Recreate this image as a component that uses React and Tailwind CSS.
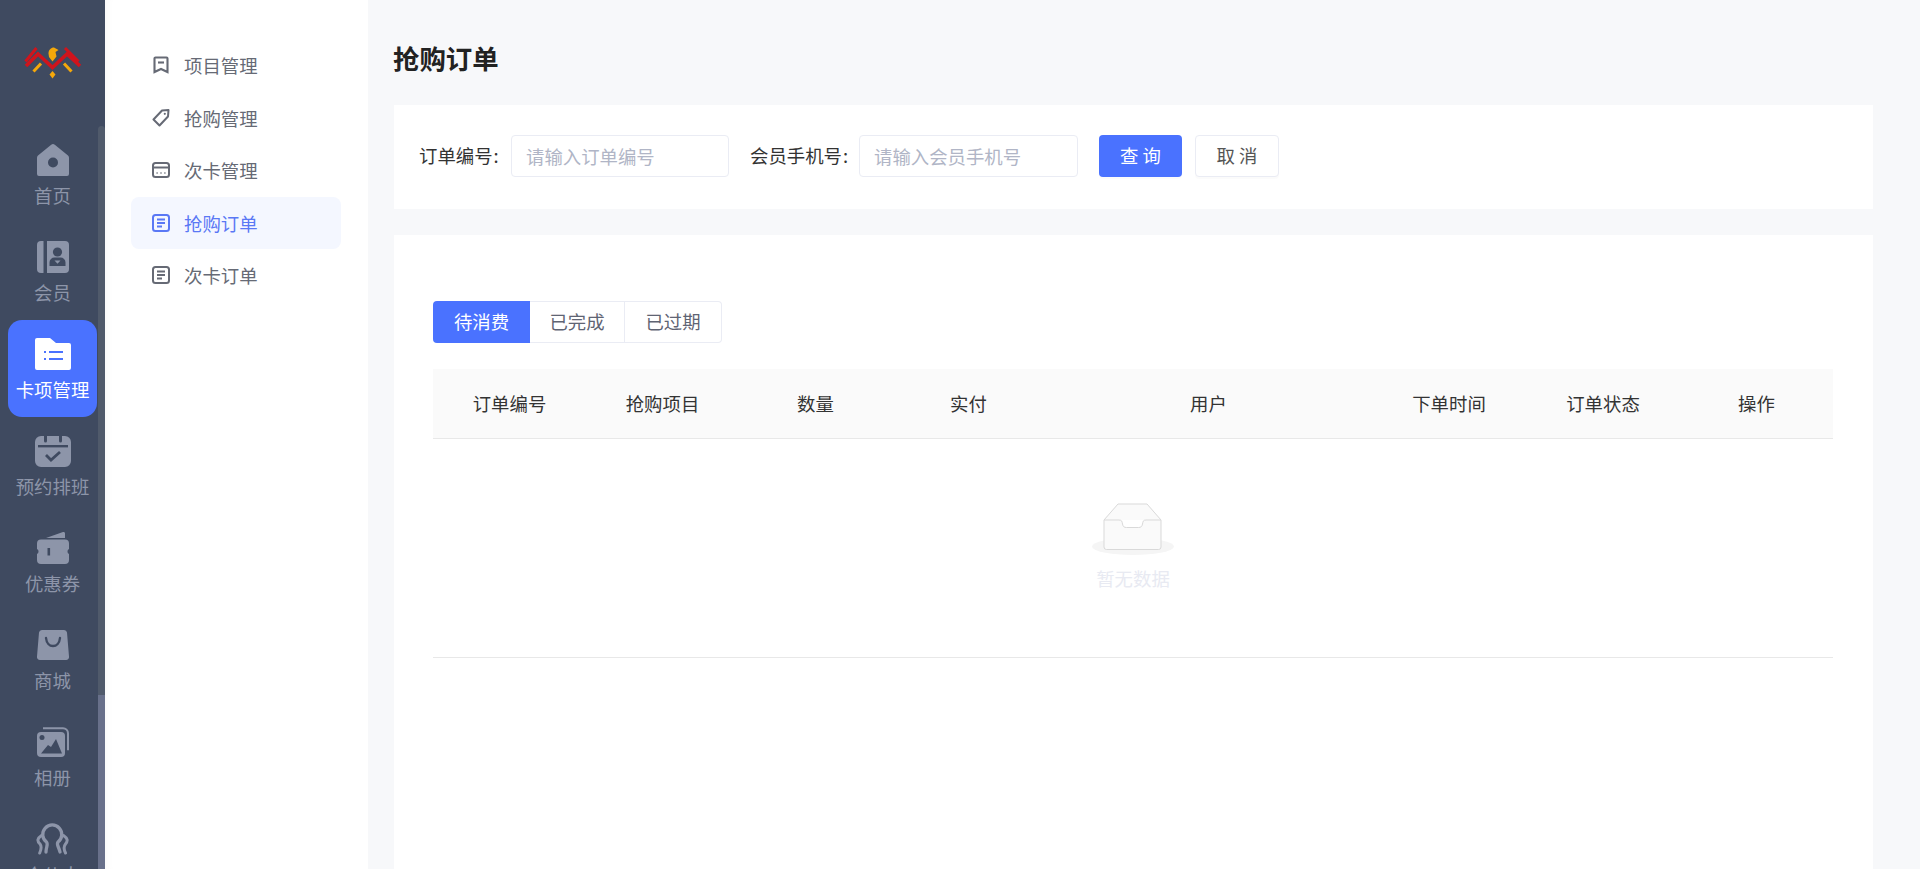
const hole = '#3f4a60'

function Logo() {
  return (
    <svg width="64" height="40" viewBox="0 0 64 40" fill="none">
      <path d="M4.500 20.500L15.500 7M44 7L57.500 20.500" stroke="#d0141c" strokeWidth="3" />
      <path d="M5 25L17 13L31.500 26.500L46 13L59 25" stroke="#d0141c" strokeWidth="3.600" />
      <path d="M12.500 30.500L20 22.500M43 22.500L50.500 30.500" stroke="#f5a80a" strokeWidth="3" />
      <path d="M27.500 12.500C27.500 9 30 6.500 33 6.500L37.500 9L34.500 11L35.500 15.500L31.500 20.500L28 16Z" fill="#f5a80a" />
      <path d="M31.500 30L34.500 33.500L31.500 37.500L28.500 33.500Z" fill="#f5a80a" />
    </svg>
  )
}

function HomeIcon() {
  return (
    <svg width="32" height="32" viewBox="0 0 32 32">
      <path d="M14.200 .7a3 3 0 0 1 3.600 0L31 11.500a3 3 0 0 1 1 2.300V30a2 2 0 0 1-2 2H2a2 2 0 0 1-2-2V13.800a3 3 0 0 1 1-2.300Z" fill="currentColor" />
      <circle cx="16" cy="18.500" r="5" fill={hole} />
    </svg>
  )
}

function MemberIcon() {
  return (
    <svg width="32" height="32" viewBox="0 0 32 32">
      <path d="M6.500 0H4a4 4 0 0 0-4 4v24a4 4 0 0 0 4 4h2.500Z" fill="currentColor" />
      <path d="M10 0h18a4 4 0 0 1 4 4v24a4 4 0 0 1-4 4H10Z" fill="currentColor" />
      <circle cx="20.500" cy="11" r="4.600" fill={hole} />
      <path d="M12.500 25v-3.500a5 5 0 0 1 5-5h6a5 5 0 0 1 5 5V25Z" fill={hole} />
      <path d="M17.500 19.500h6l-3 3.200Z" fill="currentColor" />
    </svg>
  )
}

function FolderIcon() {
  return (
    <svg width="36" height="32" viewBox="0 0 36 32">
      <path d="M0 2a2 2 0 0 1 2-2h13l6 5h13a2 2 0 0 1 2 2v23a2 2 0 0 1-2 2H2a2 2 0 0 1-2-2Z" fill="#fff" />
      <path d="M14 13h14v2H14ZM14 20h14v2H14ZM9 13h2v2H9ZM9 20h2v2H9Z" fill="#4a72ff" />
    </svg>
  )
}

function CalendarIcon() {
  return (
    <svg width="36" height="32" viewBox="0 0 36 32">
      <path d="M6 1h3v5a1.500 1.500 0 0 0 3 0V1h12v5a1.500 1.500 0 0 0 3 0V1h3a6 6 0 0 1 6 6v19a6 6 0 0 1-6 6H6a6 6 0 0 1-6-6V7a6 6 0 0 1 6-6Z" fill="currentColor" />
      <path d="M3 10h30v2.400H3Z" fill={hole} />
      <path d="M11 20l5 5 9-8" fill="none" stroke={hole} strokeWidth="2.800" />
    </svg>
  )
}

function WalletIcon() {
  return (
    <svg width="32" height="32" viewBox="0 0 32 32">
      <path d="M9 6L26 0a1.500 1.500 0 0 1 2 1.500V6Z" fill="currentColor" />
      <path d="M4 7.500h24a4 4 0 0 1 4 4v5.500a2.500 2.500 0 0 0-1.500 2.500 2.500 2.500 0 0 0 1.500 2.500v6a4 4 0 0 1-4 4H4a4 4 0 0 1-4-4v-6a2.500 2.500 0 0 0 1.500-2.500A2.500 2.500 0 0 0 0 17v-5.500a4 4 0 0 1 4-4Z" fill="currentColor" />
      <path d="M10.500 16h2.600v7.500h-2.600Z" fill={hole} />
    </svg>
  )
}

function BagIcon() {
  return (
    <svg width="32" height="30" viewBox="0 0 32 30">
      <path d="M5 0h22a3 3 0 0 1 3 2.500l2 24a3 3 0 0 1-3 3.500H3a3 3 0 0 1-3-3.500l2-24A3 3 0 0 1 5 0Z" fill="currentColor" />
      <path d="M9 8c.5 5 3.500 8 7 8s6.500-3 7-8" fill="none" stroke={hole} strokeWidth="2.400" strokeLinecap="round" />
    </svg>
  )
}

function PhotoIcon() {
  return (
    <svg width="32" height="30" viewBox="0 0 32 30">
      <path d="M6 1.200h20a5 5 0 0 1 5 5v17" fill="none" stroke="currentColor" strokeWidth="2" />
      <rect x="0" y="5" width="28" height="25" rx="4" fill="currentColor" />
      <circle cx="5" cy="10.500" r="2.500" fill={hole} />
      <path d="M4 26.500L11 18l3 2 5-8 6 14.500Z" fill={hole} />
    </svg>
  )
}

function OctoIcon() {
  return (
    <svg width="34" height="32" viewBox="0 0 34 32" fill="none" stroke="currentColor" strokeLinecap="round">
      <path d="M10 29C10 24 12.500 21.500 10.500 19A9.500 9.500 0 1 1 22 19C20 21.500 23 24 24 29" strokeWidth="3.300" />
      <path d="M5.500 12.500C1 15.500 1 18 4 21C6 23.500 5 27 3.700 30M27.500 12.500C32 15.500 32 18 29.500 21C27.500 23.500 28 27 29.500 30" strokeWidth="3" />
    </svg>
  )
}

function BookmarkIcon() {
  return (
    <svg width="18" height="18" viewBox="0 0 18 18" fill="none" stroke="currentColor" strokeWidth="2.100">
      <path d="M3.500 1.500h11a1 1 0 0 1 1 1V16L9 13l-6.500 3V2.500a1 1 0 0 1 1-1Z" />
      <path d="M6 6.500h6" />
    </svg>
  )
}

function TagIcon() {
  return (
    <svg width="18" height="18" viewBox="0 0 18 18" fill="none" stroke="currentColor" strokeWidth="2">
      <path d="M1.500 10.500L10 1.500l6.500-.5-.5 6.500L7.500 16.500Z" strokeLinejoin="round" />
      <circle cx="12.800" cy="4.800" r="1.100" fill="currentColor" stroke="none" />
    </svg>
  )
}

function CardIcon() {
  return (
    <svg width="18" height="16" viewBox="0 0 18 16" fill="none" stroke="currentColor" strokeWidth="2">
      <rect x="1" y="1" width="16" height="14" rx="2.500" />
      <path d="M1 5.500h16" />
      <path d="M4.500 11h1.200M8.400 11h1.200M12.300 11h1.200" strokeWidth="1.700" />
    </svg>
  )
}

function DocIcon() {
  return (
    <svg width="18" height="18" viewBox="0 0 18 18" fill="none" stroke="currentColor" strokeWidth="2">
      <rect x="1" y="1" width="16" height="16" rx="2.500" />
      <path d="M5 5.500h8M5 9h8M5 12.500h5" />
    </svg>
  )
}

function EmptyIcon() {
  return (
    <svg width="82" height="52" viewBox="0 0 82 52">
      <ellipse cx="41" cy="43.500" rx="41" ry="8.500" fill="#f5f5f5" />
      <path d="M12 17L26 1h29l14 16v27a2.500 2.500 0 0 1-2.500 2.500h-52A2.500 2.500 0 0 1 12 44Z" fill="#fafafa" stroke="#d9d9d9" strokeWidth="1" />
      <path d="M12 17h15c3 0 3 1.500 3.500 4s1.500 3.500 4 3.500h12c2.500 0 3.500-1 4-3.500s.5-4 3.500-4h15" fill="#fff" stroke="#d9d9d9" strokeWidth="1" />
    </svg>
  )
}

const railItems = [
  { label: '首页', icon: <HomeIcon /> },
  { label: '会员', icon: <MemberIcon /> },
  { label: '卡项管理', icon: <FolderIcon />, active: true },
  { label: '预约排班', icon: <CalendarIcon /> },
  { label: '优惠券', icon: <WalletIcon /> },
  { label: '商城', icon: <BagIcon /> },
  { label: '相册', icon: <PhotoIcon /> },
  { label: '合伙人', icon: <OctoIcon /> },
]

const subItems = [
  { label: '项目管理', icon: <BookmarkIcon /> },
  { label: '抢购管理', icon: <TagIcon /> },
  { label: '次卡管理', icon: <CardIcon /> },
  { label: '抢购订单', icon: <DocIcon />, active: true },
  { label: '次卡订单', icon: <DocIcon /> },
]

const columns = ['订单编号', '抢购项目', '数量', '实付', '用户', '下单时间', '订单状态', '操作']

export default function App() {
  return (
    <div className="flex h-screen w-full overflow-hidden bg-[#f7f8fa] font-['Noto_Sans_CJK_SC','Liberation_Sans',sans-serif] text-[18.4px] text-[#333]">
      <aside className="relative h-full w-[105px] shrink-0 overflow-hidden bg-[#3f4a60]">
        <div className="flex h-[126px] justify-center pt-[41px]">
          <Logo />
        </div>
        {railItems.map((item) => (
          <a
            key={item.label}
            href="#"
            className={
              item.active
                ? 'mx-2 flex h-[97px] w-[89px] flex-col items-center rounded-[14px] bg-[#4a72ff] pt-[18px] text-white'
                : 'flex h-[97px] w-[105px] flex-col items-center pt-[18px] text-[#8d95a9]'
            }
          >
            <span className="flex h-8 items-center justify-center">{item.icon}</span>
            <span className="mt-[6px] whitespace-nowrap leading-[26px]">{item.label}</span>
          </a>
        ))}
        <div className="absolute right-0 top-[126px] h-[569px] w-[7px] rounded-t-[4px] bg-[#505a6b]" />
        <div className="absolute right-0 top-[695px] h-[174px] w-[7px] bg-[#68708a]" />
      </aside>

      <nav className="h-full w-[263px] shrink-0 bg-white pl-[26px] pr-[27px] pt-[39px] shadow-[inset_8px_0_8px_-6px_rgba(0,0,0,0.03)]">
        {subItems.map((item) => (
          <a
            key={item.label}
            href="#"
            className={
              item.active
                ? 'flex h-[52.5px] items-center rounded-lg bg-[#f4f7ff] pl-[21px] text-[#5a78f5]'
                : 'flex h-[52.5px] items-center pl-[21px] text-[#666a75]'
            }
          >
            <span className="flex w-[18px] items-center justify-center">{item.icon}</span>
            <span className="ml-[14px] pt-[2px]">{item.label}</span>
          </a>
        ))}
      </nav>

      <main className="flex h-full min-w-0 flex-1 flex-col pl-[26px] pr-[47px]">
        <div className="flex h-[105px] shrink-0 items-center pt-[12px]">
          <h1 className="-ml-px text-[26.400px] font-bold leading-none text-[#222]">抢购订单</h1>
        </div>

        <section className="flex h-[104px] shrink-0 items-center bg-white pb-[2px] pl-[25px]">
          <label className="w-[92px] whitespace-nowrap">订单编号<span className="ml-[1px]">:</span></label>
          <input
            placeholder="请输入订单编号"
            className="h-[42px] w-[218px] rounded border border-[#eaecf4] px-[14px] outline-none placeholder:text-[#b0b5c6]"
          />
          <label className="ml-[21px] w-[109px] whitespace-nowrap">会员手机号<span className="ml-[1px]">:</span></label>
          <input
            placeholder="请输入会员手机号"
            className="h-[42px] w-[219px] rounded border border-[#eaecf4] px-[14px] outline-none placeholder:text-[#b0b5c6]"
          />
          <button className="ml-[21px] h-[42px] w-[83px] rounded bg-[#4a72ff] text-white shadow-[0_2px_0_rgba(0,0,0,0.015)]">查 询</button>
          <button className="ml-[13px] h-[42px] w-[84px] rounded border border-[#eaecf4] bg-white text-[#555] shadow-[0_2px_0_rgba(0,0,0,0.015)]">取 消</button>
        </section>

        <section className="mt-[26px] min-h-0 flex-1 bg-white pl-[39px] pr-[40px] pt-[66px]">
          <div className="flex h-[42px] text-[#5f6473]">
            <button className="h-full w-[97px] rounded-l bg-[#4a72ff] text-white">待消费</button>
            <button className="h-full w-[95px] border-y border-r border-[#eaecf4]">已完成</button>
            <button className="h-full w-[97px] rounded-r border-y border-r border-[#eaecf4]">已过期</button>
          </div>

          <div className="mt-[26px] border-b border-[#e8e8e8]">
            <div className="grid h-[70px] grid-cols-[153px_153px_153px_153px_327px_154px_154px_153px] items-center border-b border-[#e8e8e8] bg-[#fafafa]">
              {columns.map((col) => (
                <div key={col} className="text-center">{col}</div>
              ))}
            </div>
            <div className="flex h-[218px] flex-col items-center pt-[64px]">
              <EmptyIcon />
              <p className="mt-[10px] leading-[26px] text-[#e8eaf2]">暂无数据</p>
            </div>
          </div>
        </section>
      </main>
    </div>
  )
}
